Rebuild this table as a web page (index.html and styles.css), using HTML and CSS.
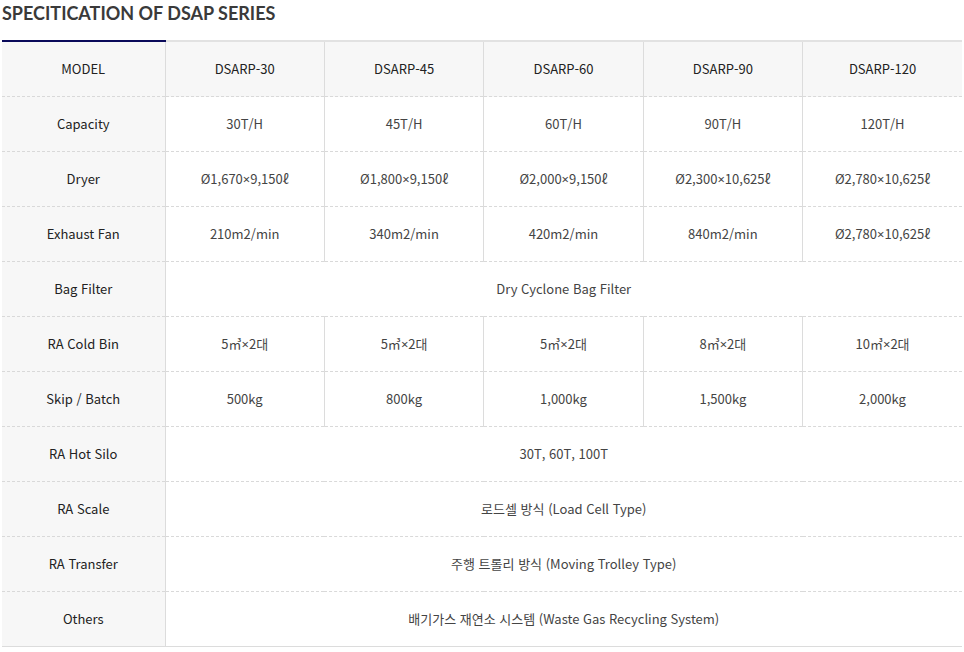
FILE: index.html
```html
<!DOCTYPE html>
<html lang="ko">
<head>
<meta charset="utf-8">
<link rel="stylesheet" href="styles.css">
</head>
<body>
<h2 class="title">SPECITICATION OF DSAP SERIES</h2>
<table class="spec">
  <colgroup>
    <col class="c-head"><col><col><col><col><col>
  </colgroup>
  <thead>
    <tr>
      <th class="first">MODEL</th>
      <th>DSARP-30</th>
      <th>DSARP-45</th>
      <th>DSARP-60</th>
      <th>DSARP-90</th>
      <th>DSARP-120</th>
    </tr>
  </thead>
  <tbody>
    <tr><th>Capacity</th><td>30T/H</td><td>45T/H</td><td>60T/H</td><td>90T/H</td><td>120T/H</td></tr>
    <tr><th>Dryer</th><td>Ø1,670<span class="mul">×</span>9,150ℓ</td><td>Ø1,800<span class="mul">×</span>9,150ℓ</td><td>Ø2,000<span class="mul">×</span>9,150ℓ</td><td>Ø2,300<span class="mul">×</span>10,625ℓ</td><td>Ø2,780<span class="mul">×</span>10,625ℓ</td></tr>
    <tr><th>Exhaust Fan</th><td>210m2/min</td><td>340m2/min</td><td>420m2/min</td><td>840m2/min</td><td>Ø2,780<span class="mul">×</span>10,625ℓ</td></tr>
    <tr><th>Bag Filter</th><td colspan="5">Dry Cyclone Bag Filter</td></tr>
    <tr><th>RA Cold Bin</th><td>5㎥<span class="mul">×</span>2대</td><td>5㎥<span class="mul">×</span>2대</td><td>5㎥<span class="mul">×</span>2대</td><td>8㎥<span class="mul">×</span>2대</td><td>10㎥<span class="mul">×</span>2대</td></tr>
    <tr><th>Skip / Batch</th><td>500kg</td><td>800kg</td><td>1,000kg</td><td>1,500kg</td><td>2,000kg</td></tr>
    <tr><th>RA Hot Silo</th><td colspan="5">30T, 60T, 100T</td></tr>
    <tr><th>RA Scale</th><td colspan="5">로드셀 방식 (Load Cell Type)</td></tr>
    <tr><th>RA Transfer</th><td colspan="5">주행 트롤리 방식 (Moving Trolley Type)</td></tr>
    <tr><th>Others</th><td colspan="5">배기가스 재연소 시스템 (Waste Gas Recycling System)</td></tr>
  </tbody>
</table>
</body>
</html>
```
FILE: styles.css
```css
html, body {
  margin: 0;
  padding: 0;
  background: #fff;
}
body {
  padding: 0 2px;
  font-family: "Noto Sans CJK KR", "Noto Sans", sans-serif;
}
.title {
  margin: 0;
  height: 40px;
  padding-top: 1px;
  box-sizing: border-box;
  font-family: Lato, "Noto Sans", sans-serif;
  font-weight: 700;
  font-size: 18px;
  line-height: 24px;
  letter-spacing: 0;
  color: #3a3a3a;
}
.spec {
  width: 960px;
  border-collapse: collapse;
  table-layout: fixed;
  border-bottom: 1px solid #dcdcdc;
}
.c-head {
  width: 163px;
}
.spec th, .spec td {
  height: 54px;
  padding: 0;
  text-align: center;
  vertical-align: middle;
  font-size: 13px;
  font-weight: 400;
  line-height: 18px;
  color: #333;
  border-top: 1px dashed #d9d9d9;
  border-left: 1px solid #dcdcdc;
}
.spec th {
  background: #f7f7f7;
  color: #222;
}
.spec tbody th, .spec thead th.first {
  border-left: none;
}
.spec thead th {
  border-top: 2px solid #e2e2e2;
  height: 54px;
}
.spec thead th.first {
  border-top: 2px solid #0a0a5a;
}
.spec td {
  color: #444;
}
.mul {
  font-family: "Noto Sans", sans-serif;
}
```
